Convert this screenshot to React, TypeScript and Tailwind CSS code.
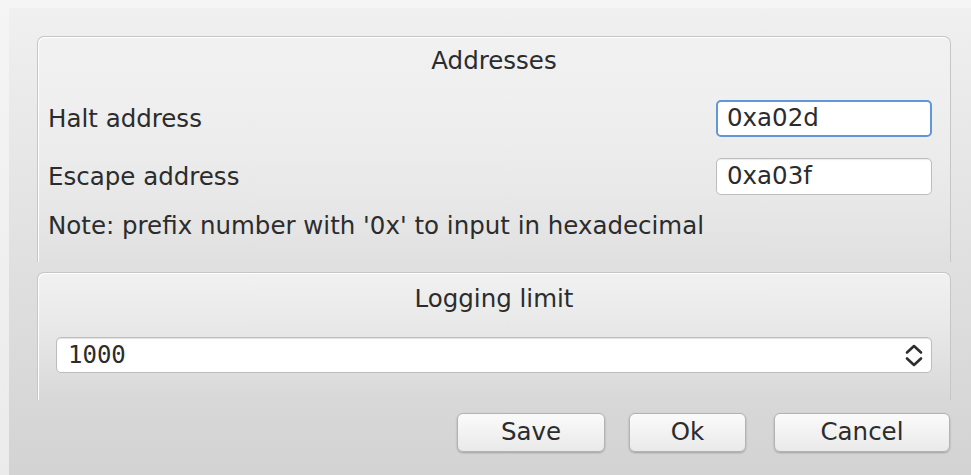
import React from "react";

const font = { fontFamily: '"DejaVu Sans", "Liberation Sans", sans-serif' };

interface GroupProps {
    title: string;
    children: React.ReactNode;
    className?: string;
}

// Qt-style group box: rounded top, border fades out towards the bottom
const GroupBox = ({ title, children, className }: GroupProps) => {
    return (
        <section
            className={
                "relative rounded-t-[7px] border-x border-t border-[#c6c6c6] bg-gradient-to-b from-[#f1f1f1] to-transparent shadow-[inset_1px_1px_0_#ffffff] " +
                (className ?? "")
            }
        >
            <div className="text-center leading-[30px]">{title}</div>
            {children}
        </section>
    );
};

const Field = ({ label, value, focused }: { label: string; value: string; focused?: boolean }) => {
    return (
        <div className="flex items-center justify-between">
            <span className="leading-[30px]">{label}</span>
            <div
                className={
                    focused
                        ? "flex h-[37px] w-[216px] items-center rounded-[5px] border-2 border-[#5f97d8] bg-white px-[9px]"
                        : "flex h-[37px] w-[216px] items-center rounded-[5px] border border-[#bdbdbd] bg-white px-[10px] shadow-[inset_0_1px_1px_rgba(0,0,0,0.08)]"
                }
            >
                {value}
            </div>
        </div>
    );
};

const Button = ({ label, className }: { label: string; className: string }) => {
    return (
        <button
            className={
                "flex h-[39px] items-center justify-center rounded-[6px] border border-[#b3b3b3] bg-gradient-to-b from-[#fbfbfb] to-[#e9e9e9] shadow-[0_1px_2px_rgba(0,0,0,0.25)] " +
                className
            }
        >
            {label}
        </button>
    );
};

export default function App() {
    return (
        <div className="h-[475px] w-[971px] overflow-hidden bg-gradient-to-b from-[#f5f5f5] to-[#ebebeb] pl-[9px] pt-[8px]" style={font}>
            <div className="flex h-full flex-col bg-gradient-to-b from-[#f0f0f0] to-[#d3d3d3] pl-[28px] pr-[20px] pt-[28px] text-[24.5px] text-[#2c2c2c]">
                <GroupBox title="Addresses" className="h-[226px] pt-[9px]">
                    <div className="flex flex-col pl-[10px] pr-[18px] pt-[24px]">
                        <Field label="Halt address" value="0xa02d" focused />
                        <div className="h-[21px]" />
                        <Field label="Escape address" value="0xa03f" />
                        <div className="pt-[16px] leading-[30px]">Note: prefix number with '0x' to input in hexadecimal</div>
                    </div>
                </GroupBox>

                <GroupBox title="Logging limit" className="mt-[10px] h-[128px] pt-[11px]">
                    <div className="px-[18px] pt-[23px]">
                        <div className="flex h-[36px] items-center justify-between rounded-[5px] border border-[#bdbdbd] bg-white pl-[11px] pr-[7px] shadow-[inset_0_1px_1px_rgba(0,0,0,0.12)]">
                            <span className="text-[24px]" style={{ fontFamily: '"DejaVu Sans Mono", "Liberation Mono", monospace' }}>
                                1000
                            </span>
                            <svg width="20" height="25" viewBox="0 0 20 25" fill="none" stroke="#2e2e2e" strokeWidth={2.6} strokeLinecap="round" strokeLinejoin="round">
                                <path d="M3 9.5 10 3l7 6.5" />
                                <path d="M3 15.5 10 22l7-6.5" />
                            </svg>
                        </div>
                    </div>
                </GroupBox>

                <div className="mt-[13px] flex justify-end pr-[1px]">
                    <Button label="Save" className="w-[148px]" />
                    <Button label="Ok" className="ml-[24px] w-[117px]" />
                    <Button label="Cancel" className="ml-[28px] w-[176px]" />
                </div>
            </div>
        </div>
    );
}
